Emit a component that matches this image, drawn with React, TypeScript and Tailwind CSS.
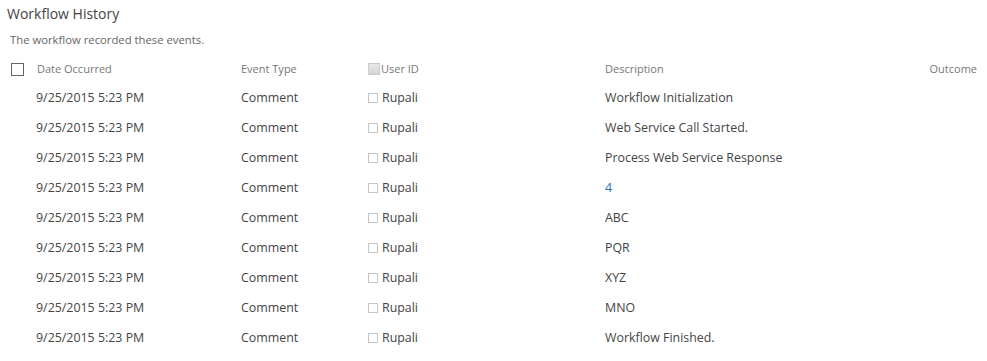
import React from 'react';

const descriptions = [
  'Workflow Initialization',
  'Web Service Call Started.',
  'Process Web Service Response',
  '4',
  'ABC',
  'PQR',
  'XYZ',
  'MNO',
  'Workflow Finished.',
];

const App: React.FC = () => {
  return (
    <div className="bg-white w-[987px] h-[361px] overflow-hidden text-[#444]" style={{ fontFamily: '"Segoe UI", "Open Sans", "Noto Sans", sans-serif' }}>
      <div className="pl-[7px] pt-[4px] text-[14px] leading-[20px] text-[#444]">Workflow History</div>
      <div className="pl-[10px] pt-[8px] text-[11.3px] leading-[16px] text-[#666]">The workflow recorded these events.</div>

      <table className="table-fixed border-collapse mt-[8px] w-[987px]">
        <colgroup>
          <col className="w-[36px]" />
          <col className="w-[205px]" />
          <col className="w-[127px]" />
          <col className="w-[237px]" />
          <col />
        </colgroup>
        <thead>
          <tr className="h-[27px] text-[11px] text-[#777]">
            <th className="p-0 pb-[1px] text-left font-normal">
              <span className="ml-[11px] block w-[13px] h-[13px] border border-[#666] bg-white" />
            </th>
            <th className="p-0 pb-[1px] text-left font-normal pl-[1px]">Date Occurred</th>
            <th className="p-0 pb-[1px] text-left font-normal">Event Type</th>
            <th className="p-0 pb-[1px] text-left font-normal">
              <span className="flex items-center">
                <span className="block w-[12px] h-[12px] border border-[#ccc] bg-gradient-to-b from-[#e8e8e8] to-[#d4d4d4]" />
                <span className="ml-[1px]">User ID</span>
              </span>
            </th>
            <th className="p-0 pb-[1px] text-left font-normal">Description</th>
            <th className="p-0 pb-[1px] text-right font-normal pr-[10px]">Outcome</th>
          </tr>
        </thead>
        <tbody>
          {descriptions.map((d, i) => (
            <tr key={i} className="h-[30px] text-[12.4px]">
              <td className="p-0" />
              <td className="p-0">9/25/2015 5:23 PM</td>
              <td className="p-0">Comment</td>
              <td className="p-0">
                <span className="flex items-center">
                  <span className="block w-[10px] h-[10px] border border-[#c6c6c6] bg-white" />
                  <span className="ml-[4px]">Rupali</span>
                </span>
              </td>
              <td className={d === '4' ? 'p-0 text-[#2a6ab8]' : 'p-0'}>{d}</td>
              <td className="p-0" />
            </tr>
          ))}
        </tbody>
      </table>
    </div>
  );
};

export default App;
